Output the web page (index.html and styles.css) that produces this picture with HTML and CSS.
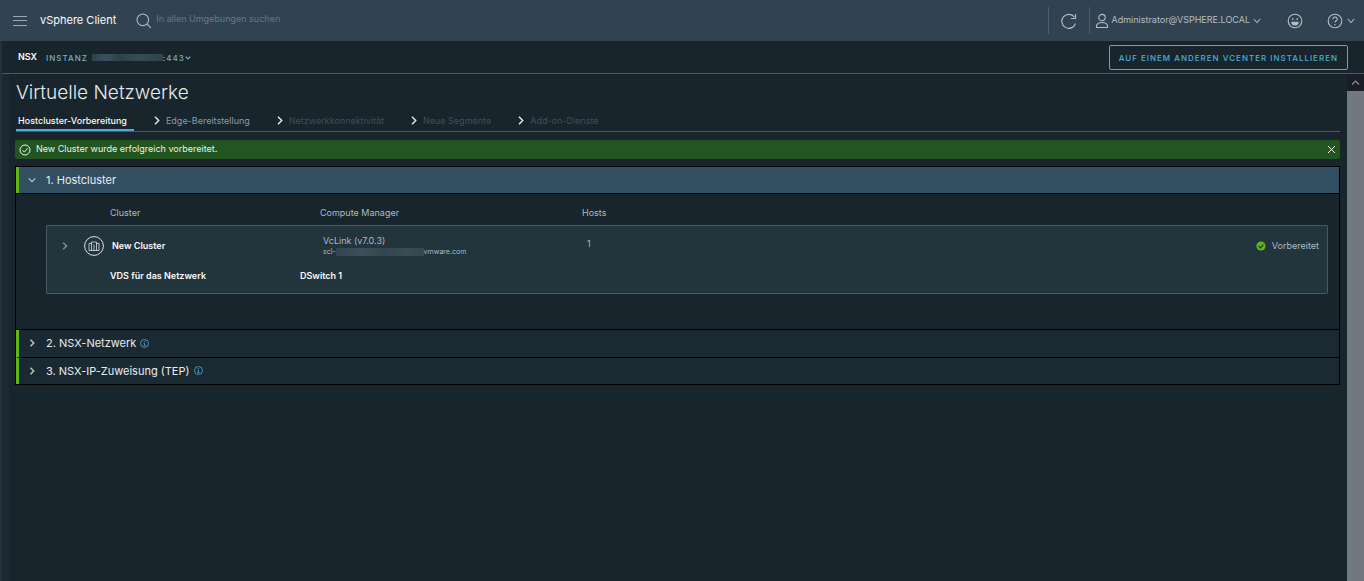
FILE: index.html
```html
<!DOCTYPE html>
<html lang="de">
<head>
<meta charset="utf-8">
<title>vSphere Client – Virtuelle Netzwerke</title>
<link rel="stylesheet" href="styles.css">
</head>
<body>
<header class="topbar">
  <button class="icon-btn menu" aria-label="Menü"><svg width="14" height="12" viewBox="0 0 14 12"><path d="M0 1.500h14M0 5.500h14M0 10.500h14"/></svg></button>
  <a class="brand" href="#">vSphere Client</a>
  <label class="search"><svg width="16" height="16" viewBox="0 0 16 16"><circle cx="6.800" cy="6.800" r="5.800"/><path d="M11 11l3.800 3.800"/></svg><input type="text" aria-label="Suchen" placeholder="In allen Umgebungen suchen"></label>
  <div class="top-actions">
    <button class="icon-btn refresh" aria-label="Aktualisieren"><svg width="16" height="16" viewBox="0 0 16 16"><path d="M13.500 4.200A7 7 0 1 0 14.500 10.500M14.500 1v4.500H10"/></svg></button>
    <button class="user"><svg width="14" height="16" viewBox="0 0 14 16"><circle cx="7" cy="4.600" r="3.200"/><path d="M1.500 14.500v-2.200c1-2 3-2.800 5.500-2.800s4.500.8 5.500 2.800v2.200z"/></svg><span>Administrator@VSPHERE.LOCAL</span><svg width="8" height="6" viewBox="0 0 8 6"><path d="M.8 1L4 4.500 7.200 1"/></svg></button>
    <button class="icon-btn smile" aria-label="Feedback"><svg width="16" height="16" viewBox="0 0 16 16"><circle cx="8" cy="8" r="6.800"/><path class="solid" d="M4.200 8.800h7.600a3.800 3.600 0 0 1-7.600 0zM5 5.200h1.500v1.500H5zM9.500 5.200H11v1.500H9.500z"/></svg></button>
    <button class="icon-btn help" aria-label="Hilfe"><svg width="16" height="16" viewBox="0 0 16 16"><circle cx="8" cy="8" r="6.800"/><path d="M5.800 6.300c0-3 4.600-2.700 4.400-.1C10.100 7.800 8 7.700 8 9.600M8 11v1.200"/></svg><svg width="8" height="6" viewBox="0 0 8 6"><path d="M.8 1L4 4.500 7.200 1"/></svg></button>
  </div>
</header>
<div class="frame">
  <div class="instance-bar">
    <span class="product">NSX</span>
    <button class="instance">INSTANZ<span class="masked"></span>:443<svg width="6" height="4" viewBox="0 0 6 4"><path d="M.7.700L3 3 5.300.700"/></svg></button>
    <button class="install">AUF EINEM ANDEREN VCENTER INSTALLIEREN</button>
  </div>
  <div class="workspace">
    <main class="content">
      <h1>Virtuelle Netzwerke</h1>
      <nav class="steps">
        <a class="step active" href="#">Hostcluster-Vorbereitung</a>
        <svg class="sep" width="6" height="9" viewBox="0 0 6 9"><path d="M1 .8l3.700 3.700L1 8.200"/></svg>
        <a class="step" href="#">Edge-Bereitstellung</a>
        <svg class="sep" width="6" height="9" viewBox="0 0 6 9"><path d="M1 .8l3.700 3.700L1 8.200"/></svg>
        <a class="step off" href="#">Netzwerkkonnektivität</a>
        <svg class="sep" width="6" height="9" viewBox="0 0 6 9"><path d="M1 .8l3.700 3.700L1 8.200"/></svg>
        <a class="step off" href="#">Neue Segmente</a>
        <svg class="sep" width="6" height="9" viewBox="0 0 6 9"><path d="M1 .8l3.700 3.700L1 8.200"/></svg>
        <a class="step off" href="#">Add-on-Dienste</a>
      </nav>
      <div class="alert" role="status">
        <svg width="12" height="12" viewBox="0 0 12 12"><circle cx="6" cy="6" r="5"/><path d="M3.400 6.200l1.900 1.900 3.400-3.700"/></svg>
        <span class="alert-text">New Cluster wurde erfolgreich vorbereitet.</span>
        <button class="icon-btn close" aria-label="Schließen"><svg width="9" height="9" viewBox="0 0 9 9"><path d="M1 1l7 7M8 1L1 8"/></svg></button>
      </div>
      <div class="accordion">
        <button class="panel-head open"><svg width="8" height="8" viewBox="0 0 8 8"><path d="M.8 2.500L4 5.700l3.200-3.200"/></svg>1. Hostcluster</button>
        <div class="panel-body">
          <table class="clusters">
            <colgroup><col class="c-name"><col class="c-manager"><col class="c-hosts"><col></colgroup>
            <thead><tr><th>Cluster</th><th>Compute Manager</th><th>Hosts</th><th></th></tr></thead>
            <tbody>
              <tr class="main-row">
                <td><div class="name"><button class="icon-btn expand" aria-label="Erweitern"><svg width="6" height="8" viewBox="0 0 6 8"><path d="M1.200.8L4.500 4 1.200 7.200"/></svg></button><svg class="cluster-icon" width="20" height="20" viewBox="0 0 20 20"><circle cx="10" cy="10" r="9.400"/><path d="M7.500 7.500H5v7h10v-7h-2.500M7.500 14.500V6h5v8.500M10 8.500v6" stroke-width=".8"/></svg>New Cluster</div></td>
                <td><div class="manager">VcLink (v7.0.3)</div><div class="fqdn">scl-<span class="masked"></span>vmware.com</div></td>
                <td>1</td>
                <td><div class="status"><svg width="10" height="10" viewBox="0 0 10 10"><circle cx="5" cy="5" r="4.600"/><path d="M2.700 5.100l1.700 1.700 2.900-3.200"/></svg>Vorbereitet</div></td>
              </tr>
              <tr class="detail-row"><td>VDS für das Netzwerk</td><td>DSwitch 1</td><td></td><td></td></tr>
            </tbody>
          </table>
        </div>
        <button class="panel-head"><svg class="closed" width="8" height="8" viewBox="0 0 8 8"><path d="M2.500.8L5.700 4 2.500 7.200"/></svg>2. NSX-Netzwerk<svg class="info" width="9" height="9" viewBox="0 0 9 9"><circle cx="4.500" cy="4.500" r="4"/><path d="M4.500 2v1M3.500 4.200h1v2.500M3.300 6.700h2.400"/></svg></button>
        <button class="panel-head"><svg class="closed" width="8" height="8" viewBox="0 0 8 8"><path d="M2.500.8L5.700 4 2.500 7.200"/></svg>3. NSX-IP-Zuweisung (TEP)<svg class="info" width="9" height="9" viewBox="0 0 9 9"><circle cx="4.500" cy="4.500" r="4"/><path d="M4.500 2v1M3.500 4.200h1v2.500M3.300 6.700h2.400"/></svg></button>
      </div>
    </main>
    <div class="scrollbar"><button class="icon-btn scroll-up" aria-label="Nach oben"><svg width="9" height="7" viewBox="0 0 9 7"><path d="M1 5.500L4.500 2 8 5.500"/></svg></button><div class="thumb"></div></div>
  </div>
</div>
</body>
</html>
```
FILE: styles.css
```css
* { box-sizing: border-box; }
body {
  margin: 0;
  min-height: 100vh;
  display: flex;
  flex-direction: column;
  background: #18252c;
  color: #adbbc4;
  font: 9px/12px Inter, "Liberation Sans", sans-serif;
}
button, input { font: inherit; color: inherit; background: none; border: 0; padding: 0; margin: 0; }
a { color: inherit; text-decoration: none; }
svg { fill: none; stroke: currentColor; stroke-width: 1.2; flex: none; }
.icon-btn { display: flex; align-items: center; justify-content: center; }

.topbar { display: flex; align-items: center; height: 41px; padding-left: 13px; background: #314351; }
.topbar svg { stroke-width: 1.1; }
.topbar .solid { fill: currentColor; stroke: none; }
.menu { color: #9aa7b0; }
.brand { margin-left: 13px; padding-bottom: 2px; color: #fafafa; font-size: 11px; line-height: 16px; }
.search { display: flex; align-items: center; gap: 4px; margin-left: 20px; flex: 1; color: #adbbc4; }
.search input { flex: 1; min-width: 0; padding-bottom: 3px; outline: 0; }
.search input::placeholder { color: #667784; opacity: 1; }
.top-actions { display: flex; align-items: center; color: #b3bec6; }
.refresh { width: 42px; height: 27px; border: solid #4d5f6c; border-width: 0 1px; }
.user { display: flex; align-items: center; gap: 3px; margin-left: 5px; }
.user span { padding-bottom: 2px; }
.smile { margin-left: 26px; }
.help { gap: 4px; margin: 0 9px 0 24px; }

.frame { flex: 1; display: flex; flex-direction: column; border-left: 2px solid #22323b; }
.instance-bar { display: flex; align-items: center; height: 33px; padding: 0 16px; border-bottom: 1px solid #495a64; }
.product { color: #fafafa; font-weight: 600; }
.instance { display: flex; align-items: center; margin-left: 9px; padding-top: 1px; color: #79aebf; font-size: 8px; letter-spacing: 1px; font-weight: 500; }
.masked { display: inline-block; background: linear-gradient(90deg, #2d424d, #3a505c 20%, #2d424d 40%, #384d58 65%, #2d424d); }
.instance .masked { width: 71px; height: 7px; margin-left: 4px; }
.install { margin-left: auto; height: 25px; padding: 2px 9px 0; border: 1px solid #49afd9; border-radius: 2px; color: #49afd9; font-size: 8px; letter-spacing: 1px; font-weight: 500; }

.workspace { flex: 1; display: flex; border-left: 7px solid #1b2a32; }
.content { flex: 1; min-width: 0; padding: 6px 7px 20px 6px; }
h1 { margin: 0; padding-left: 1px; color: #e9ecef; font-size: 19px; line-height: 26px; font-weight: 300; }
.steps { display: flex; align-items: center; height: 26px; padding-top: 4px; margin-left: 1px; border-bottom: 1px solid #495a64; }
.step { color: #8b9aa4; }
.step.active { align-self: stretch; padding: 5px 7px 0 2px; color: #fafafa; font-weight: 500; border-bottom: 2px solid #49afd9; }
.step.off { color: #3f4f59; }
.sep { margin: 0 6px 0 27px; color: #e0e4e7; stroke-width: 1.5; }
.active + .sep { margin-left: 20px; }
.alert { display: flex; align-items: center; gap: 5px; height: 19px; margin: 8px 0 7px; padding: 0 4px; border-radius: 2px; background: #225520; color: #eaf2ea; }
.alert svg { stroke-width: 1; }
.alert-text { padding-bottom: 2px; }
.close { margin-left: auto; }

.accordion { border: 1px solid #000; }
.panel-head { display: flex; align-items: center; gap: 10px; width: 100%; height: 27px; padding: 0 0 1px 9px; border-left: 3px solid #60b515; background: #1b2a32; color: #e9ecef; font-size: 11px; line-height: 16px; }
.panel-head.open { height: 26px; background: #324f62; }
.panel-head svg { color: #b3bec6; }
.panel-head .closed { stroke-width: 1.6; }
.panel-head .info { color: #49afd9; margin-left: -6px; stroke-width: .8; }
.panel-head + .panel-head { border-top: 1px solid #000; }
.panel-body { padding: 10px 11px 35px 30px; border: solid #000; border-width: 1px 0; }

.clusters { width: 100%; table-layout: fixed; border-collapse: separate; border-spacing: 0; }
.c-name { width: 254px; }
.c-manager { width: 260px; }
.c-hosts { width: 120px; }
th { height: 21px; padding: 0 0 3px 20px; font-weight: 400; text-align: left; }
th:first-child { padding-left: 64px; }
th:nth-child(3) { padding-left: 22px; }
td { padding: 0; background: #22343c; vertical-align: middle; }
.main-row td { height: 40px; border-top: 1px solid #495a64; }
.main-row td:nth-child(2) { padding-left: 23px; }
.main-row td:nth-child(3) { padding: 0 0 4px 27px; }
td:first-child { border-left: 1px solid #495a64; }
td:last-child { border-right: 1px solid #495a64; }
.main-row td:first-child { border-top-left-radius: 2px; }
.main-row td:last-child { border-top-right-radius: 2px; }
.name { display: flex; align-items: center; color: #fafafa; font-weight: 600; }
.expand { margin-left: 15px; color: #7d8b94; }
.expand svg { stroke-width: 1.6; }
.cluster-icon { margin: 0 8px 0 16px; color: #e0e4e7; stroke-width: 1; }
.manager { line-height: 12px; }
.fqdn { display: flex; align-items: center; font-size: 7px; line-height: 10px; }
.fqdn .masked { width: 88px; height: 8px; background: linear-gradient(90deg, #33464f, #3c505a 30%, #33464f 55%, #3a4d57 80%, #33464f); }
.status { display: flex; align-items: center; justify-content: flex-end; gap: 6px; padding-right: 8px; }
.status svg { color: #22343c; }
.status circle { fill: #60b515; stroke: none; }
.detail-row td { height: 29px; padding-bottom: 7px; border-bottom: 1px solid #495a64; color: #fafafa; font-weight: 600; }
.detail-row td:first-child { padding-left: 63px; border-bottom-left-radius: 2px; }
.detail-row td:last-child { border-bottom-right-radius: 2px; }

.scrollbar { display: flex; flex-direction: column; width: 17px; }
.scroll-up { height: 17px; background: #191d27; color: #8a9096; }
.thumb { flex: 1; background: #717880; }
```
